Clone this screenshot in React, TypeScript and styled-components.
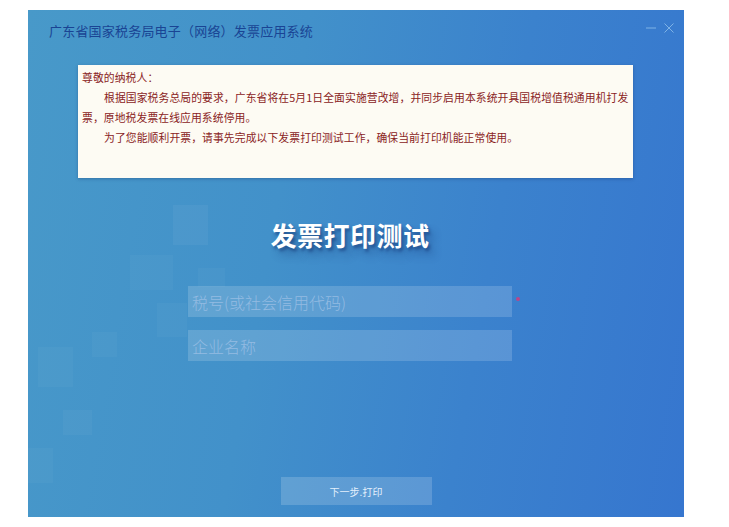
import React from 'react';
import styled, { createGlobalStyle } from 'styled-components';

const GlobalStyle = createGlobalStyle`
  html, body {
    margin: 0;
    padding: 0;
    background: #ffffff;
  }
  body {
    font-family: "Noto Sans CJK SC", "Noto Sans", sans-serif;
  }
`;

const Page = styled.div`
  width: 729px;
  height: 527px;
  padding: 10px 0 0 28px;
  box-sizing: border-box;
`;

const Window = styled.div`
  position: relative;
  width: 656px;
  height: 507px;
  overflow: hidden;
  display: flex;
  flex-direction: column;
  background: linear-gradient(100deg, #4899c9 0%, #4291ca 38%, #3b82cd 68%, #3676cf 100%);
`;

const Decor = styled.svg`
  position: absolute;
  left: 0;
  top: 0;
  width: 656px;
  height: 507px;
  pointer-events: none;
`;

const TitleBar = styled.div`
  position: relative;
  height: 40px;
  display: flex;
  align-items: center;
  justify-content: space-between;
  padding: 0 10px 0 21px;
`;

const Title = styled.h1`
  margin: 0;
  font-size: 13px;
  font-weight: 400;
  color: #1a4494;
  letter-spacing: 0.2px;
`;

const Controls = styled.div`
  display: flex;
  align-items: center;
  gap: 8px;
  margin-top: -4px;
`;

const ControlButton = styled.button`
  width: 10px;
  height: 10px;
  padding: 0;
  border: 0;
  background: none;
  display: flex;
  align-items: center;
  justify-content: center;
  cursor: pointer;
`;

const Notice = styled.div`
  position: relative;
  margin: 15px 51px 0 50px;
  height: 113px;
  box-sizing: border-box;
  padding: 2px 4px 0 4px;
  background: #fdfbf3;
  box-shadow: 0 1px 3px rgba(20, 50, 100, 0.35);
  color: #8a2323;
  font-size: 10.8px;
  line-height: 20px;
  overflow: hidden;
`;

const NoticeLine = styled.p<{ $indent?: boolean }>`
  margin: 0;
  white-space: nowrap;
  letter-spacing: 0.1px;
  text-indent: ${(p) => (p.$indent ? '22px' : '0')};
`;

const Form = styled.div`
  position: relative;
  padding-left: 160px;
  display: flex;
  flex-direction: column;
`;

const Heading = styled.h2`
  width: 324px;
  margin: 39px 0 0 0;
  height: 36px;
  line-height: 36px;
  text-align: center;
  font-size: 26px;
  font-weight: 700;
  color: #ffffff;
  letter-spacing: 0.5px;
  text-shadow: 2px 3px 3px rgba(18, 48, 110, 0.5), 6px 8px 8px rgba(18, 48, 110, 0.3);
`;

const FieldRow = styled.div<{ $top: number }>`
  display: flex;
  align-items: center;
  gap: 4px;
  margin-top: ${(p) => p.$top}px;
`;

const Input = styled.input`
  width: 324px;
  height: 31px;
  box-sizing: border-box;
  border: 0;
  outline: none;
  padding: 0 4px;
  background: rgba(255, 255, 255, 0.16);
  color: #ffffff;
  font-family: "Noto Sans CJK SC", "Noto Sans", sans-serif;
  font-size: 16px;
  font-weight: 300;
  &::placeholder {
    color: #93bbe2;
  }
`;

const Required = styled.span`
  width: 4px;
  height: 4px;
  border-radius: 50%;
  background: #b9468a;
  margin-top: -6px;
`;

const NextButton = styled.button`
  position: relative;
  align-self: center;
  margin: 116px 0 0 0;
  width: 151px;
  height: 28px;
  border: 0;
  background: rgba(255, 255, 255, 0.17);
  color: #e4f0fc;
  font-family: "Noto Sans CJK SC", "Noto Sans", sans-serif;
  font-size: 10px;
  cursor: pointer;
`;

const squares = [
  { x: 145, y: 195, w: 35, h: 40, o: 0.045 },
  { x: 102, y: 245, w: 43, h: 35, o: 0.03 },
  { x: 170, y: 258, w: 27, h: 19, o: 0.03 },
  { x: 129, y: 293, w: 30, h: 34, o: 0.03 },
  { x: 64, y: 322, w: 25, h: 25, o: 0.03 },
  { x: 10, y: 337, w: 35, h: 40, o: 0.03 },
  { x: 35, y: 400, w: 29, h: 25, o: 0.035 },
  { x: 0, y: 438, w: 25, h: 35, o: 0.03 },
];

export default function App() {
  return (
    <>
      <GlobalStyle />
      <Page>
        <Window>
          <Decor viewBox="0 0 656 507">
            {squares.map((s, i) => (
              <rect key={i} x={s.x} y={s.y} width={s.w} height={s.h} fill="#ffffff" opacity={s.o} />
            ))}
          </Decor>
          <TitleBar>
            <Title>广东省国家税务局电子（网络）发票应用系统</Title>
            <Controls>
              <ControlButton aria-label="最小化">
                <svg width="10" height="10" viewBox="0 0 10 10">
                  <line x1="0" y1="5" x2="10" y2="5" stroke="#7fb3e6" strokeWidth="1" />
                </svg>
              </ControlButton>
              <ControlButton aria-label="关闭">
                <svg width="10" height="10" viewBox="0 0 10 10">
                  <path d="M0.5 0.5 L9.5 9.5 M9.5 0.5 L0.5 9.5" stroke="#7fb3e6" strokeWidth="1" />
                </svg>
              </ControlButton>
            </Controls>
          </TitleBar>

          <Notice>
            <NoticeLine>尊敬的纳税人：</NoticeLine>
            <NoticeLine $indent>
              根据国家税务总局的要求，广东省将在5月1日全面实施营改增，并同步启用本系统开具国税增值税通用机打发
              <br />
              票，原地税发票在线应用系统停用。
            </NoticeLine>
            <NoticeLine $indent>为了您能顺利开票，请事先完成以下发票打印测试工作，确保当前打印机能正常使用。</NoticeLine>
          </Notice>

          <Form>
            <Heading>发票打印测试</Heading>
            <FieldRow $top={33}>
              <Input placeholder="税号(或社会信用代码)" />
              <Required />
            </FieldRow>
            <FieldRow $top={13}>
              <Input placeholder="企业名称" />
            </FieldRow>
          </Form>

          <NextButton>下一步.打印</NextButton>
        </Window>
      </Page>
    </>
  );
}
